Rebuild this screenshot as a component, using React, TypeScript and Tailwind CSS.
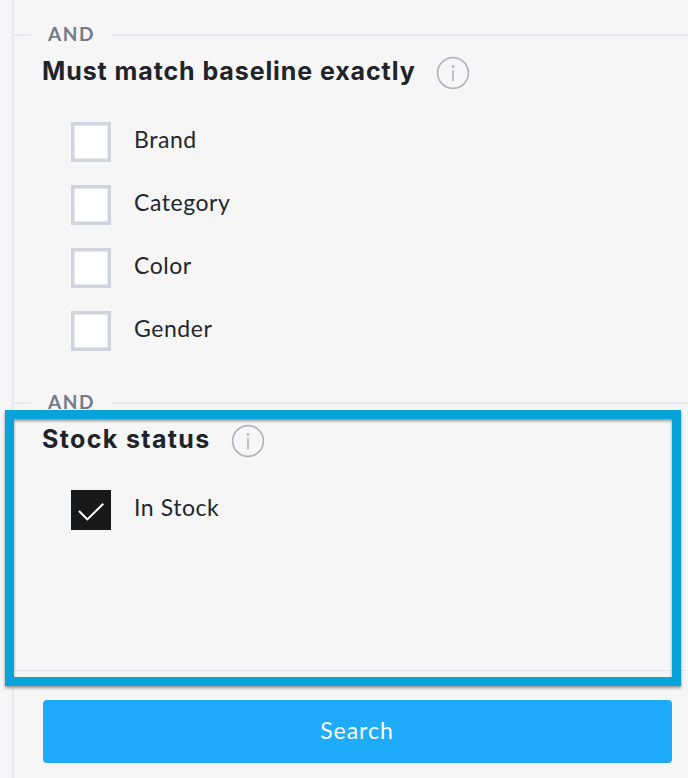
import React from 'react';

const InfoIcon: React.FC = () => (
  <svg
    className="h-[34px] w-[34px] shrink-0"
    viewBox="0 0 34 34"
    fill="none"
    stroke="#b0b5c3"
    strokeWidth="1.7"
  >
    <circle cx="17" cy="17" r="15.4" />
    <path d="M17 14.3V25.3" strokeWidth="1.6" />
    <circle cx="17" cy="10.5" r="1.4" fill="#b0b5c3" stroke="none" />
  </svg>
);

const Divider: React.FC<{ label: string }> = ({ label }) => (
  <div className="flex h-7 items-center">
    <div className="h-0.5 w-[17px] bg-[#e8e9ee]" />
    <span className="-mt-0.5 ml-[17px] w-[64px] font-['Lato',sans-serif] text-[19px] leading-7 font-bold tracking-[1.6px] text-[#747b87]">
      {label}
    </span>
    <div className="h-0.5 flex-1 bg-[#e8e9ee]" />
  </div>
);

interface CheckboxProps {
  label: string;
  checked?: boolean;
}

const Checkbox: React.FC<CheckboxProps> = ({ label, checked = false }) => (
  <label className="flex h-10 items-center gap-[23px]">
    <span
      className={
        checked
          ? 'h-10 w-10 bg-[#18191b]'
          : 'h-10 w-10 border-[3px] border-[#d0d4de] bg-white shadow-[inset_0_0_0_0.5px_#d0d4de]'
      }
    >
      {checked && (
        <svg viewBox="0 0 40 40" className="h-10 w-10" fill="none" stroke="#fff" strokeWidth="2">
          <path d="M8 21L16.3 29.4L32.3 13.8" />
        </svg>
      )}
    </span>
    <span className="-mt-1.5 font-['Lato',sans-serif] text-[23px] leading-8 tracking-[0.55px] text-[#23272d]">
      {label}
    </span>
  </label>
);

interface SectionProps {
  title: string;
  titleClass: string;
  options: CheckboxProps[];
}

const Section: React.FC<SectionProps> = ({ title, titleClass, options }) => (
  <section className="h-[368px]">
    <Divider label="AND" />
    <div className="mt-[7px] flex h-[34px] pl-[28px]">
      <h2
        className={`font-['Inter',sans-serif] text-[25px] leading-[30px] font-bold whitespace-nowrap text-[#202429] ${titleClass}`}
      >
        {title}
      </h2>
      <InfoIcon />
    </div>
    <div className="mt-8 flex flex-col gap-[23px] pl-[57px]">
      {options.map((option) => (
        <Checkbox key={option.label} {...option} />
      ))}
    </div>
  </section>
);

const matchOptions = [
  { label: 'Brand' },
  { label: 'Category' },
  { label: 'Color' },
  { label: 'Gender' },
];

const stockOptions = [{ label: 'In Stock', checked: true }];

export default function App() {
  return (
    <div className="relative h-[778px] w-[688px] overflow-hidden bg-[#f6f6f6] pl-3">
      <div className="flex h-full flex-col border-l-2 border-[#e8e9ee]">
        <div className="h-[671px] border-b border-[#e5e7ec] pt-[21px]">
          <Section
            title="Must match baseline exactly"
            titleClass="w-[393.6px] tracking-[0.91px]"
            options={matchOptions}
          />
          <div className="h-[280px]">
            <Section
              title="Stock status"
              titleClass="w-[188.6px] tracking-[1.36px]"
              options={stockOptions}
            />
          </div>
        </div>
        <div className="mt-[29px] pr-[16.5px] pl-[28.5px]">
          <button className="h-[63px] w-full rounded-[4px] bg-[#1eabf9] pb-[2px] font-['Lato',sans-serif] text-[23px] tracking-[1px] text-white">
            Search
          </button>
        </div>
      </div>
      {/* Highlight around the stock filter */}
      <div className="pointer-events-none absolute top-[410px] left-[5px] h-[276px] w-[676px] border-[9px] border-[#07a3d9] shadow-[0_2px_3px_rgba(0,0,0,0.4),inset_0_2px_3px_rgba(0,0,0,0.4)]" />
    </div>
  );
}
